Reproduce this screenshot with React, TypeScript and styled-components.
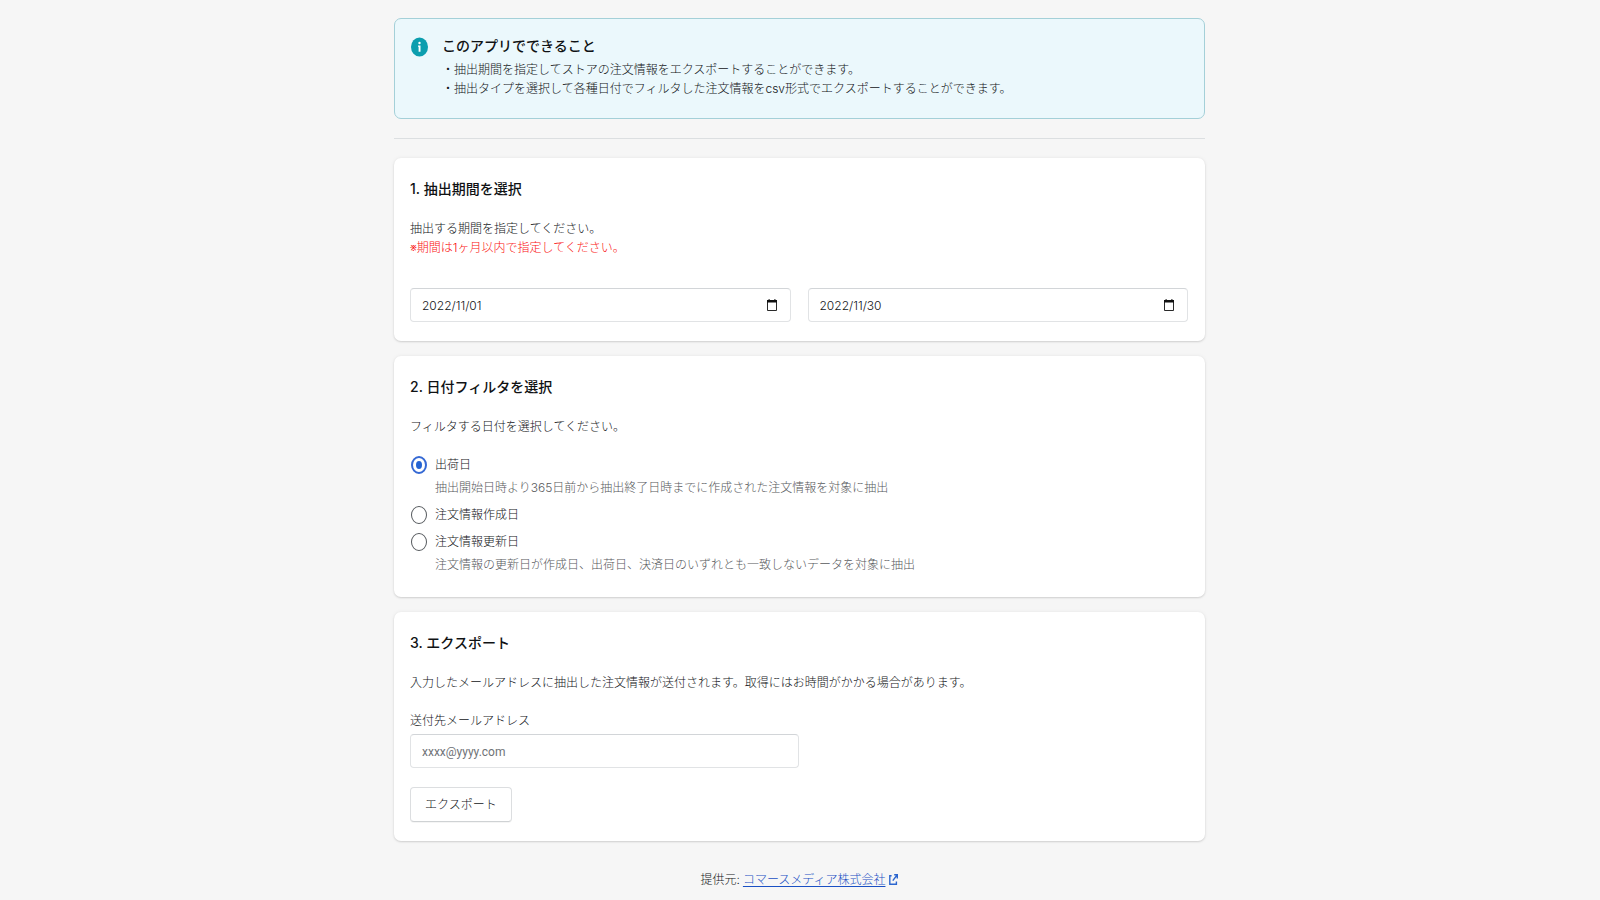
import React, { useState } from "react";
import styled, { createGlobalStyle } from "styled-components";

const GlobalStyle = createGlobalStyle`
  *, *::before, *::after { box-sizing: border-box; }
  body {
    margin: 0;
    background: #f6f6f6;
    color: #121417;
    font-family: Inter, "Noto Sans CJK JP", sans-serif;
    font-size: 12px;
    font-weight: 300;
    line-height: 19px;
  }
  input, button { font: inherit; color: inherit; }
  h2, p, ul { margin: 0; padding: 0; }
`;

const Page = styled.main`
  width: 100%;
  max-width: 812px;
  margin: 0 auto;
  padding: 18px 1px 11px 0;
`;

const Banner = styled.section`
  display: flex;
  gap: 14px;
  padding: 15px 16px 20px;
  border: 1px solid #a4d0d8;
  border-radius: 7px;
  background: #ebf8fc;
`;

const BannerIcon = styled.svg`
  flex: none;
  width: 17px;
  height: 20px;
  margin-top: 3px;
`;

const BannerBody = styled.div`
  display: flex;
  flex-direction: column;
  gap: 2px;
`;

const Heading = styled.h2`
  color: #101214;
  font-size: 14px;
  font-weight: 500;
  line-height: 24px;
`;

const BannerList = styled.ul`
  list-style: none;
  li::before { content: "・"; }
`;

const Divider = styled.hr`
  height: 1px;
  margin: 19px 0;
  border: 0;
  background: #dcdfe1;
`;

const Cards = styled.div`
  display: flex;
  flex-direction: column;
  gap: 15px;
`;

const Card = styled.section`
  padding: 19px 17px 19px 16px;
  border-radius: 7px;
  background: #fff;
  box-shadow: 0 0 4px rgba(23, 24, 24, 0.06), 0 1px 2px rgba(0, 0, 0, 0.13);
`;

const Text = styled.p`
  margin-top: 18px;
`;

const Warning = styled.p`
  color: #fa0f0f;
`;

const DateRow = styled.div`
  display: grid;
  grid-template-columns: 1fr 1fr;
  gap: 17px;
  margin-top: 31px;
`;

const Field = styled.div`
  display: flex;
  align-items: center;
  height: 34px;
  padding: 0 13px 0 11px;
  border: 1px solid #e1e3e5;
  border-top-color: #d2d5d8;
  border-radius: 4px;
  background: #fff;
  &:focus-within { border-color: #2c6ecb; }
`;

const FieldInput = styled.input`
  flex: 1;
  min-width: 0;
  height: 100%;
  padding: 0;
  border: 0;
  outline: 0;
  background: transparent;
  &::placeholder {
    color: #6f7377;
    font-family: Roboto, sans-serif;
    font-weight: 400;
    opacity: 1;
  }
`;

const PickerButton = styled.button`
  display: flex;
  padding: 0;
  border: 0;
  background: transparent;
  color: #111;
  cursor: pointer;
`;

const Options = styled.div`
  margin-top: 15px;
  padding-left: 1px;
`;

const OptionLabel = styled.label`
  display: flex;
  align-items: center;
  gap: 8px;
  height: 27px;
`;

const Radio = styled.input`
  appearance: none;
  display: grid;
  place-items: center;
  width: 16px;
  height: 18px;
  margin: 0;
  border: 1px solid #55595d;
  border-radius: 50%;
  background: #fff;
  &:checked { border: 2px solid #3569d4; }
  &:checked::before {
    content: "";
    width: 6px;
    height: 8px;
    border-radius: 50%;
    background: #2463d2;
  }
`;

const Help = styled.p`
  margin: 0 0 4px;
  padding-left: 24px;
  color: #57595c;
`;

const EmailField = styled.div`
  width: 50%;
  margin-top: 19px;
  label { display: block; margin-bottom: 4px; }
`;

const ExportButton = styled.button`
  display: block;
  height: 35px;
  margin-top: 19px;
  padding: 0 14px;
  border: 1px solid #dcdee0;
  border-bottom-color: #cfd2d4;
  border-radius: 4px;
  background: #fff;
  box-shadow: 0 1px 0 rgba(0, 0, 0, 0.04);
  cursor: pointer;
`;

const Footer = styled.footer`
  display: flex;
  justify-content: center;
  align-items: center;
  gap: 3px;
  margin-top: 29px;
`;

const ProviderLink = styled.a`
  display: flex;
  align-items: center;
  gap: 4px;
  color: #1a50c4;
  text-decoration: none;
  span { text-decoration: underline; text-underline-offset: 2px; }
`;

function InfoIcon() {
  return (
    <BannerIcon viewBox="0 0 17 20" aria-hidden="true">
      <ellipse cx="8.5" cy="10" rx="8.5" ry="9.5" fill="#0c9eae" />
      <ellipse cx="8.5" cy="6" rx="1.2" ry="1.3" fill="#fff" />
      <path d="M7 8.6h2.5v6.2H7.6V9.8H7z" fill="#fff" />
    </BannerIcon>
  );
}

function CalendarIcon() {
  return (
    <svg width="10" height="12" viewBox="0 0 10 12" aria-hidden="true">
      <path d="M.5 1.7h9v9.8h-9z" fill="none" stroke="currentColor" strokeWidth="0.9" />
      <path d="M0 1h10v2.4H0zM1.6 0h1v2h-1zM7.4 0h1v2h-1z" fill="currentColor" />
    </svg>
  );
}

function ExternalIcon() {
  return (
    <svg width="9" height="11" viewBox="0 0 9 11" fill="none" stroke="#2c66cf" strokeWidth="1.4" aria-hidden="true">
      <path d="M2.6 1.8H.8v8.4h6.6V7.6" />
      <path d="M5.2.8h3.1v3.6M8.1 1L3.8 6.6" />
    </svg>
  );
}

function DateField({ label, initial }: { label: string; initial: string }) {
  const [value, setValue] = useState(initial);
  return (
    <Field>
      <FieldInput aria-label={label} value={value} onChange={(e) => setValue(e.target.value)} />
      <PickerButton type="button" aria-label={label}>
        <CalendarIcon />
      </PickerButton>
    </Field>
  );
}

const options = [
  { id: "shipped", label: "出荷日", help: "抽出開始日時より365日前から抽出終了日時までに作成された注文情報を対象に抽出" },
  { id: "created", label: "注文情報作成日" },
  { id: "updated", label: "注文情報更新日", help: "注文情報の更新日が作成日、出荷日、決済日のいずれとも一致しないデータを対象に抽出" },
];

export default function App() {
  const [filter, setFilter] = useState("shipped");
  const [email, setEmail] = useState("");
  return (
    <Page lang="ja">
      <GlobalStyle />
      <Banner>
        <InfoIcon />
        <BannerBody>
          <Heading>このアプリでできること</Heading>
          <BannerList>
            <li>抽出期間を指定してストアの注文情報をエクスポートすることができます。</li>
            <li>抽出タイプを選択して各種日付でフィルタした注文情報をcsv形式でエクスポートすることができます。</li>
          </BannerList>
        </BannerBody>
      </Banner>
      <Divider />
      <Cards>
        <Card>
          <Heading>1. 抽出期間を選択</Heading>
          <Text>抽出する期間を指定してください。</Text>
          <Warning>※期間は1ヶ月以内で指定してください。</Warning>
          <DateRow>
            <DateField label="開始日" initial="2022/11/01" />
            <DateField label="終了日" initial="2022/11/30" />
          </DateRow>
        </Card>
        <Card>
          <Heading>2. 日付フィルタを選択</Heading>
          <Text>フィルタする日付を選択してください。</Text>
          <Options role="radiogroup">
            {options.map((o) => (
              <React.Fragment key={o.id}>
                <OptionLabel>
                  <Radio type="radio" name="filter" checked={filter === o.id} onChange={() => setFilter(o.id)} />
                  {o.label}
                </OptionLabel>
                {o.help && <Help>{o.help}</Help>}
              </React.Fragment>
            ))}
          </Options>
        </Card>
        <Card>
          <Heading>3. エクスポート</Heading>
          <Text>入力したメールアドレスに抽出した注文情報が送付されます。取得にはお時間がかかる場合があります。</Text>
          <EmailField>
            <label htmlFor="email">送付先メールアドレス</label>
            <Field>
              <FieldInput id="email" type="email" placeholder="xxxx@yyyy.com" value={email} onChange={(e) => setEmail(e.target.value)} />
            </Field>
          </EmailField>
          <ExportButton type="button">エクスポート</ExportButton>
        </Card>
      </Cards>
      <Footer>
        提供元:
        <ProviderLink href="#">
          <span>コマースメディア株式会社</span>
          <ExternalIcon />
        </ProviderLink>
      </Footer>
    </Page>
  );
}
